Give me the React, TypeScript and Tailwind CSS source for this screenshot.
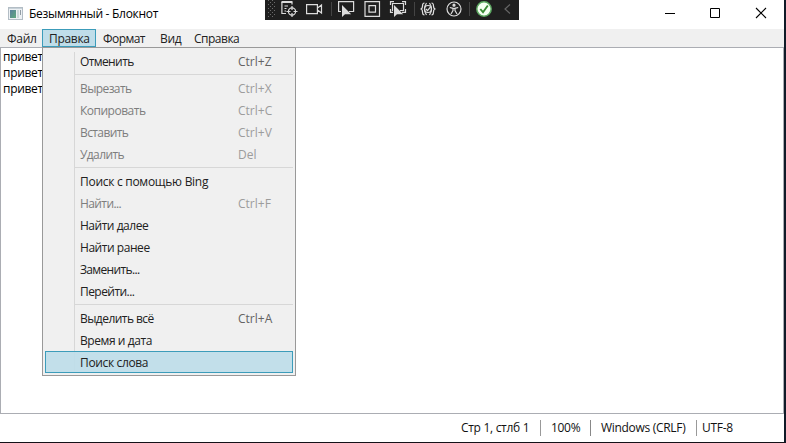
import type { ReactNode } from "react";

type Item = { label: string; keys?: string; off?: boolean; active?: boolean; track: string };

const groups: Item[][] = [
  [{ label: "Отменить", keys: "Ctrl+Z", track: "tracking-[-0.6px]" }],
  [
    { label: "Вырезать", keys: "Ctrl+X", off: true, track: "tracking-[-0.6px]" },
    { label: "Копировать", keys: "Ctrl+C", off: true, track: "tracking-[-0.5px]" },
    { label: "Вставить", keys: "Ctrl+V", off: true, track: "tracking-[-0.6px]" },
    { label: "Удалить", keys: "Del", off: true, track: "tracking-[-0.6px]" },
  ],
  [
    { label: "Поиск с помощью Bing", track: "tracking-[-0.28px]" },
    { label: "Найти...", keys: "Ctrl+F", off: true, track: "tracking-[-0.6px]" },
    { label: "Найти далее", track: "tracking-[-0.48px]" },
    { label: "Найти ранее", track: "tracking-[-0.45px]" },
    { label: "Заменить...", track: "tracking-[-0.65px]" },
    { label: "Перейти...", track: "tracking-[-0.55px]" },
  ],
  [
    { label: "Выделить всё", keys: "Ctrl+A", track: "tracking-[-0.55px]" },
    { label: "Время и дата", track: "tracking-[-0.42px]" },
    { label: "Поиск слова", active: true, track: "tracking-[-0.35px]" },
  ],
];

function MenuRow({ item, low }: { item: Item; low: boolean }) {
  return (
    <div
      className={`mx-[2px] flex h-[22px] items-center border pl-[34px] ${low ? "pt-[2px]" : ""} ${
        item.active ? "border-[#3c9cba] bg-[#bfdde9]/95" : "border-transparent"
      }`}
    >
      <span className={`w-[158px] ${item.track} ${item.off ? "text-[#7d7d7d]" : "text-[#212121]"}`}>{item.label}</span>
      <span className={item.off ? "text-[#9c9c9c]" : "text-[#636363]"}>{item.keys}</span>
    </div>
  );
}

function EditMenu() {
  return (
    <div className="absolute left-[42px] top-[47px] z-10 h-[329px] w-[254px] border border-[#999] bg-[#f0f0f0] pt-[3px]">
      <div className="absolute bottom-[4px] left-[31px] top-[4px] w-px bg-[#d7d7d7]" />
      <div className="relative">
        {groups.map((g, i) => (
          <div key={i}>
            {i > 0 && (
              <div className={i === 3 ? "h-[4px] pt-px" : "h-[5px] pt-px"}>
                <div className="ml-[32px] mr-[2px] h-px bg-[#d7d7d7]" />
              </div>
            )}
            {g.map((item) => (
              <MenuRow key={item.label} item={item} low={i === 3} />
            ))}
          </div>
        ))}
      </div>
    </div>
  );
}

function Icon({ w, children }: { w: string; children: ReactNode }) {
  return (
    <svg className={`h-[18px] shrink-0 ${w}`} viewBox="0 0 18 18" fill="none" stroke="#dcdcdc" strokeWidth="1.2">
      {children}
    </svg>
  );
}

const pointer = "M5 5v12l3-2.800h6.200z";

function DebugToolbar() {
  return (
    <div className="absolute left-[265px] top-0 flex h-[20px] w-[254px] bg-[#1f1f1f]">
      <svg className="h-[20px] w-[14px]" viewBox="0 0 14 20" fill="#6b6b6b">
        {[0, 1, 2, 3, 4, 5, 6, 7, 8].map((r) => (
          <g key={r}>
            <rect x={r % 2 ? 5 : 3} y={r * 2} width="1" height="1" />
            <rect x={r % 2 ? 9 : 7} y={r * 2} width="1" height="1" />
          </g>
        ))}
      </svg>
      <Icon w="ml-px w-[18px]">
        <path d="M1.500 2h11" strokeWidth="2" />
        <path d="M1.900 2v11.500H6M12 2.500v2M4.500 6H8M4.500 8.500h2M4.500 11h1.500" />
        <circle cx="12" cy="11.500" r="3.600" />
        <path d="M12 6v4M12 13v4M6.500 11.500h4M13.500 11.500h4" />
      </Icon>
      <Icon w="ml-[8px] w-[18px]">
        <path d="M.6 4.600h10.800v9H.6zM11.500 8l4-3v8l-4-3" />
      </Icon>
      <div className="ml-[7px] mt-[2px] h-[14px] w-px bg-[#444]" />
      <Icon w="ml-[5px] w-[18px]">
        <path d="M4 11.500H1.600V1.600h15v9.900H12" />
        <path d={pointer} fill="#dcdcdc" stroke="none" />
      </Icon>
      <Icon w="ml-[8px] w-[18px]">
        <path d="M2 1.700h14.500v14.600H2zM6 5.700h6.500v6.500H6z" />
      </Icon>
      <Icon w="ml-[8px] w-[18px]">
        <path d="M1.500 5V1.600H5M13 1.600h3.500V5M1.500 9v3.400H4M16.500 9v3.400H13M4 10.500h-.5V3.500h11v7H11" />
        <path d={pointer} fill="#dcdcdc" stroke="none" />
      </Icon>
      <div className="ml-[7px] mt-[2px] h-[14px] w-px bg-[#444]" />
      <Icon w="ml-[4px] w-[18px]">
        <path d="M5.500 3Q3.500 3 3.500 6 3.500 9 1.500 9q2 0 2 3 0 3 2 3M12.500 3q2 0 2 3 0 3 2 3-2 0-2 3 0 3-2 3M7.500 3Q5.500 6 5.500 9T7.500 15M10.500 3q2 3 2 6t-2 6" />
        <circle cx="9" cy="9" r="3.500" />
        <path d="m7 9 1.500 1.600L11.500 7" />
      </Icon>
      <Icon w="ml-[8px] w-[18px]">
        <circle cx="9" cy="9" r="7" />
        <circle cx="9" cy="5.200" r="1" fill="#dcdcdc" />
        <path d="M4.800 7.500 8 8.300v2.200l-2 3.500M13.200 7.500 10 8.300v2.200l2 3.500M8 8.500h2" />
      </Icon>
      <div className="ml-[6px] mt-[2px] h-[14px] w-px bg-[#444]" />
      <Icon w="ml-[5px] w-[18px]">
        <circle cx="9" cy="9" r="7.200" fill="#f4fff2" stroke="#5ca961" strokeWidth="1.500" />
        <path d="m5.300 9 2.700 3.200 4.800-6.700" stroke="#388a34" strokeWidth="1.900" />
      </Icon>
      <Icon w="ml-[6px] w-[18px]">
        <path d="m11 4.500-5 4.500 5 4.500" stroke="#666" />
      </Icon>
    </div>
  );
}

function TitleBar() {
  return (
    <div className="flex h-[29px] items-center text-black">
      <svg className="-mt-[2px] ml-[8px] h-[13px] w-[15px]" viewBox="0 0 15 13">
        <rect x=".5" y=".5" width="14" height="12" fill="#edf1f4" stroke="#b3bdc5" />
        <path d="M1 1.500h13" stroke="#c7d1d8" />
        <defs>
          <linearGradient id="pane" x2="1" y2="1">
            <stop stopColor="#597f9d" />
            <stop offset="1" stopColor="#5faa7c" />
          </linearGradient>
        </defs>
        <rect x="2" y="3" width="6" height="8" fill="url(#pane)" />
        <rect x="9" y="3" width="2" height="8" fill="#cbd8d9" />
        <rect x="12" y="3" width="1" height="5" fill="#929ca4" />
      </svg>
      <span className="-mt-[2px] ml-[6px] text-[12px] tracking-[-0.28px]">Безымянный - Блокнот</span>
      <svg className="-mt-[3px] ml-auto mr-[17px] h-[12px] w-[103px]" viewBox="0 0 103 12" fill="none" stroke="#000">
        <path d="M1 6.500h10M46.500 1.500h9v9h-9z" />
        <path d="m92 1 10 10M102 1 92 11" strokeWidth="1.100" />
      </svg>
    </div>
  );
}

export default function App() {
  return (
    <div className="relative h-[443px] w-[786px] overflow-hidden whitespace-nowrap border-b border-r-2 border-b-[#141218] border-r-[#101b28] bg-white font-['Open_Sans','Noto_Sans',sans-serif] text-[12px] leading-[16px]">
      <TitleBar />
      <div className="flex h-[18px] items-center bg-[#f0f0f0] pt-[2px] tracking-[-0.3px] text-[#212121]">
        <span className="w-[42px] pl-[7px]">Файл</span>
        <span className="-mt-[2px] h-[18px] w-[54px] border border-[#3c9cba] bg-[#bfdde9] pl-[6px] pt-px">Правка</span>
        <span className="w-[56px] pl-[7px] tracking-[-0.55px]">Формат</span>
        <span className="w-[35px] pl-[8px]">Вид</span>
        <span className="pl-[7px] tracking-[-0.5px]">Справка</span>
      </div>
      <div className="h-[367px] border border-[#abadb3] pl-[2px] pt-px tracking-[-0.3px] text-black">
        <div>привет</div>
        <div>привет</div>
        <div>привет</div>
      </div>
      <div className="flex h-[28px] items-center tracking-[-0.3px] text-[#111]">
        <span className="ml-[461px] w-[79px]">Стр 1, стлб 1</span>
        <span className="h-[16px] w-[50px] border-l border-[#999] pl-[10px]">100%</span>
        <span className="h-[16px] w-[106px] border-l border-[#888] pl-[10px]">Windows (CRLF)</span>
        <span className="h-[16px] border-l border-[#999] pl-[5px]">UTF-8</span>
      </div>
      <DebugToolbar />
      <EditMenu />
    </div>
  );
}
